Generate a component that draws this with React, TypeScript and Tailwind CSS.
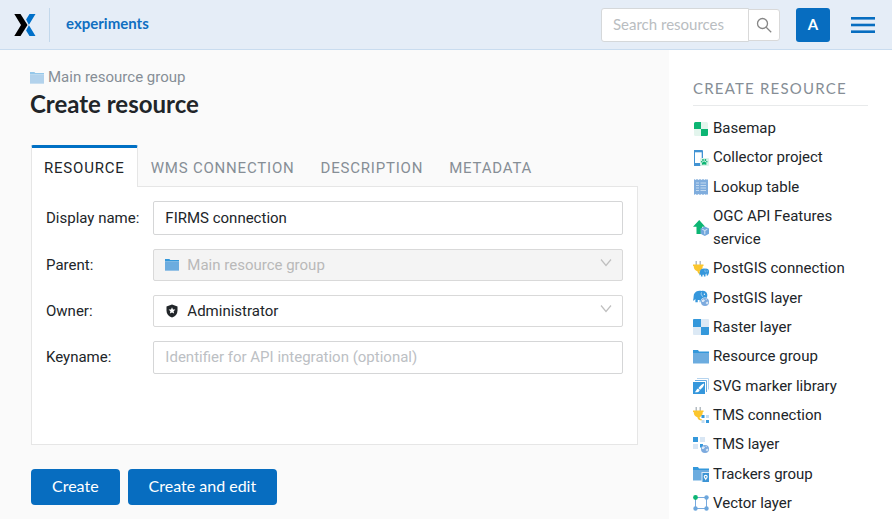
import type { ReactNode } from "react";

const tabs = ["Resource", "WMS connection", "Description", "Metadata"];

function Icon({ children, className = "" }: { children: ReactNode; className?: string }) {
  return (
    <svg viewBox="0 0 16 16" className={`size-4 shrink-0 ${className}`} aria-hidden="true">
      {children}
    </svg>
  );
}

function Folder({ className = "" }: { className?: string }) {
  return (
    <Icon className={className}>
      <path d="M0 1h5l1 1.400H16V4H0z" fill="#3498db" />
      <path d="M0 4h16v10.500H0z" fill="#6cacdf" />
    </Icon>
  );
}

const cube = (
  <g>
    <path d="M11.800 6.500l4.200 2v5.300L11.800 16l-4.300-2.200V8.500z" fill="#72a7dc" />
    <path d="M9.300 9.300l2.500 1.200 2.600-1.200M11.800 10.500v3.800" stroke="#dce9f6" strokeWidth="1" fill="none" />
  </g>
);

const plug = (
  <g>
    <path d="M2.500 0h1.500v4H2.500zM6.500 0H8v4H6.500z" fill="#b4bcc2" />
    <path d="M0 3.500h10.500v1.600H9.800c0 3-1.500 4.600-3.200 5.200.2 1.500 1 1.900 2.200 1.900v1.400c-2.500 0-4-.9-4.400-3.300C2.200 9.700.7 8 .7 5.100H0z" fill="#fbc62d" />
  </g>
);

const elephant = (
  <g>
    <path d="M1 4.500C2.500 1 6 .3 9 1c3-.5 5.500.8 6 3.700.2 2.300-.5 4.500-1.800 6.500-.6 1-1.500.8-1.900-.2L11 8.500 9.500 10v3H7v-2.500H5V13H2.500V9.500L1 11H0c.8-1.800.4-4.200 1-6.500z" fill="#3597dc" />
    <path d="M9 2.500c-1 2 0 3.500 1.500 4.500" stroke="#d5e8f7" strokeWidth=".7" fill="none" />
    <circle cx="12" cy="4.500" r=".7" fill="#fff" />
  </g>
);

const globe = (
  <g>
    <circle cx="12" cy="12" r="4" fill="#7caade" />
    <path d="M9 10l2-.8 1 1.200-1.500 1.700L9 12zM12.500 13l1.800-1.500 1 1-1 2zM12.300 8.800l1.700.7-.8.8z" fill="#dce9f6" />
  </g>
);

const resources: { name: string; icon: ReactNode }[] = [
  {
    name: "Basemap",
    icon: (
      <Icon>
        <rect x="1" y="1" width="14" height="14" rx="1.500" fill="#e3f5ed" />
        <path d="M2.500 1H8v7H1V2.500A1.500 1.500 0 0 1 2.500 1zM8 8h7v5.500a1.500 1.500 0 0 1-1.500 1.500H8z" fill="#0cb573" />
      </Icon>
    ),
  },
  {
    name: "Collector project",
    icon: (
      <Icon>
        <path d="M1 0h8a1 1 0 0 1 1 1v14a1 1 0 0 1-1 1H1z" fill="#4293d3" />
        <path d="M2 2.300h6.700V13H2z" fill="#fff" />
        <rect x="7" y="8" width="9" height="8" rx="1" fill="#d9f2e8" />
        <path d="M11.200 11.500c1.300 0 2.600 1.800 2.300 2.800-.4.900-1.500.3-2.300.3s-1.900.6-2.300-.3c-.3-1 1-2.800 2.300-2.800z" fill="#0cb573" />
        <g fill="#0cb573">
          <circle cx="10" cy="10" r=".9" />
          <circle cx="12.400" cy="10" r=".9" />
          <circle cx="8.700" cy="11.800" r=".8" />
          <circle cx="13.800" cy="11.800" r=".8" />
        </g>
      </Icon>
    ),
  },
  {
    name: "Lookup table",
    icon: (
      <Icon>
        <path d="M1 0l1.500 1L4 0l1.500 1L7 0l1.500 1L10 0l1.500 1L13 0l1 1 1-1v16l-1-1-1 1-1.500-1-1.500 1-1.500-1L7 16l-1.500-1L4 16l-1.500-1L1 16z" fill="#80addd" />
        <path d="M3 4h3m1.500 0H13M3 6.500h3m1.500 0H13M3 9h3m1.500 0H13M3 11.500h3m1.500 0H13" stroke="#c3daf0" strokeWidth="1" />
      </Icon>
    ),
  },
  {
    name: "OGC API Features service",
    icon: (
      <Icon>
        <path d="M6.200 0l6 6.700H9V14H3.500V6.700H0z" fill="#0cb573" />
        {cube}
      </Icon>
    ),
  },
  {
    name: "PostGIS connection",
    icon: (
      <Icon>
        {plug}
        <g transform="translate(6.300 7) scale(.65)">{elephant}</g>
      </Icon>
    ),
  },
  {
    name: "PostGIS layer",
    icon: (
      <Icon>
        <g transform="scale(.95)">{elephant}</g>
        <circle cx="12" cy="12" r="4.600" fill="#fff" />
        {globe}
      </Icon>
    ),
  },
  {
    name: "Raster layer",
    icon: (
      <Icon>
        <rect width="16" height="16" rx="1" fill="#dce9f5" />
        <path d="M1 0h7v8H0V1a1 1 0 0 1 1-1zM8 8h8v7a1 1 0 0 1-1 1H8z" fill="#3498db" />
      </Icon>
    ),
  },
  { name: "Resource group", icon: <Folder /> },
  {
    name: "SVG marker library",
    icon: (
      <Icon>
        <path d="M4 .5h11.500v11" stroke="#b5d3ee" strokeWidth="1" fill="none" />
        <path d="M2 2.500h11.500v11.500" stroke="#6cacdf" strokeWidth="1" fill="none" />
        <rect y="4" width="12" height="12" fill="#3597dc" />
        <path d="M11 5.500c.5 2-2 5-4 6.200L5.500 10C7 8 9.500 5.500 11 5.500zM5 10.500l1.700 1.700c-.5 1.800-2.700 2.300-4.900 2.100 1.600-1 1.400-3.300 3.200-3.800z" fill="#fff" />
      </Icon>
    ),
  },
  {
    name: "TMS connection",
    icon: (
      <Icon>
        {plug}
        <path d="M8.500 8h3v3h-3zM13 13h3v3h-3z" fill="#3498db" />
        <path d="M13 8h3v3h-3zM8.500 13h3v3h-3z" fill="#c5ddf2" />
      </Icon>
    ),
  },
  {
    name: "TMS layer",
    icon: (
      <Icon>
        <path d="M0 0h5v5H0zM7 7h3v3.500H7z" fill="#3498db" />
        <path d="M7 0h5v5H7zM0 7h5v5H0z" fill="#d8e6f4" />
        {globe}
      </Icon>
    ),
  },
  {
    name: "Trackers group",
    icon: (
      <Icon>
        <path d="M0 1h5l1 1.400H16V4H0z" fill="#3498db" />
        <path d="M0 4h16v10.500H0z" fill="#6cacdf" />
        <path d="M8.500 6H16v10H8.500z" fill="#dce9f6" />
        <path d="M9.500 7H16v9H9.500z" fill="#3b94d5" />
        <circle cx="12.700" cy="10.800" r="2" fill="#fff" />
        <circle cx="12.700" cy="10.800" r=".9" fill="#3b94d5" />
        <path d="M11.500 12l1.200 2.500 1.200-2.500z" fill="#fff" />
      </Icon>
    ),
  },
  {
    name: "Vector layer",
    icon: (
      <Icon>
        <path d="M2.500 2.500h11v11h-11z" stroke="#78aade" strokeWidth="1" fill="none" />
        <circle cx="2.500" cy="2.500" r="2.400" fill="#0cb573" />
        <g fill="#6ca6dc">
          <circle cx="13.500" cy="2.500" r="2.200" />
          <circle cx="2.500" cy="13.500" r="2.200" />
          <circle cx="13.500" cy="13.500" r="2.200" />
        </g>
      </Icon>
    ),
  },
];

function Chevron() {
  return (
    <svg viewBox="0 0 12 12" className="pointer-events-none absolute top-[9px] right-[11px] size-3" fill="none" stroke="#bfbfbf" aria-hidden="true">
      <path d="M1 1.500l5 6 5-6" strokeWidth="1.200" />
    </svg>
  );
}

function Shield() {
  return (
    <svg viewBox="0 0 14 14" className="size-[14px]" aria-hidden="true">
      <path d="M7 .5l5.500 2v4.300c0 3.200-2.200 5.600-5.500 6.700-3.300-1.100-5.500-3.500-5.500-6.700V2.500z" fill="#212529" />
      <path d="M7 3.200l1 2.200 2.400.2-1.800 1.600.5 2.400L7 8.400 4.900 9.600l.5-2.400-1.800-1.600 2.400-.2z" fill="#fff" />
    </svg>
  );
}

export default function App() {
  return (
    <div className="flex min-h-screen flex-col bg-[#fafafa] font-[Roboto,sans-serif] text-[15px] leading-[23px] text-[#212529]">
      <header className="flex h-[50px] items-center border-b border-[#c9dcef] bg-[#e5edf7] pr-[17px] pl-[13px] font-[Lato,sans-serif]">
        <a href="#home" aria-label="Home" className="border-r border-[#c3d8eb] py-[5px] pr-3">
          <svg viewBox="0 0 24 24" className="size-6" aria-hidden="true">
            <path d="M1.300 1H7.500l7 11-7 11H1.300l6.700-11z" fill="#000" />
            <path d="M16.500 1h6L15.800 12l6.700 11h-6l-3.400-5.600L16 12l-2.900-5.400z" fill="#0070c9" />
          </svg>
        </a>
        <a href="#experiments" className="ml-4 pb-[2px] font-bold text-[#106fc1]">
          experiments
        </a>
        <form className="ml-auto flex items-center" role="search">
          <input
            type="text"
            aria-label="Search resources"
            placeholder="Search resources"
            className="h-[34px] w-[148px] rounded-l-[3px] border border-[#d5d8da] bg-white px-[11px] pb-[2px] outline-none placeholder:text-[#b9bdc1]"
          />
          <button type="button" aria-label="Search" className="-ml-px flex h-8 w-8 items-center justify-center rounded-r-[3px] border border-[#d9d9d9] bg-white">
            <svg viewBox="0 0 16 16" className="size-4" fill="none" stroke="#868686" strokeWidth="1.300" aria-hidden="true">
              <circle cx="6.500" cy="6.500" r="5" />
              <path d="M10.200 10.200l5 5" />
            </svg>
          </button>
        </form>
        <button type="button" className="ml-4 size-[34px] rounded-[3px] bg-[#076dc0] font-bold text-white">
          A
        </button>
        <button type="button" aria-label="Menu" className="ml-[21px]">
          <svg viewBox="0 0 24 16" className="h-4 w-6" fill="#076dc0" aria-hidden="true">
            <rect width="24" height="2.600" />
            <rect y="6.700" width="24" height="2.600" />
            <rect y="13.400" width="24" height="2.600" />
          </svg>
        </button>
      </header>

      <div className="flex flex-1">
        <main className="min-w-0 flex-1 px-[31px] pt-4 pb-[14px]">
          <nav aria-label="Breadcrumb" className="-ml-px">
            <a href="#main" className="flex items-center gap-1 text-[#868e96]">
              <Folder className="size-[14px] opacity-50" />
              Main resource group
            </a>
          </nav>
          <h1 className="-ml-px font-[Lato,sans-serif] text-[24px] leading-[30px] font-bold">Create resource</h1>

          <div role="tablist" className="mt-[26px] flex">
            {tabs.map((tab, i) => (
              <button
                key={tab}
                type="button"
                role="tab"
                aria-selected={i === 0}
                className={
                  i === 0
                    ? "relative -mb-px h-[42px] rounded-t-[2px] border-x border-t-3 border-x-[#e6e6e6] border-t-[#0070c4] bg-white px-3 pt-px tracking-[0.8px] uppercase"
                    : "h-[41px] border-x border-t-3 border-transparent px-3 pt-[2px] tracking-[0.8px] text-[#868e96] uppercase"
                }
              >
                {tab}
              </button>
            ))}
          </div>

          <form id="resource" className="grid min-h-[259px] grid-cols-[auto_1fr] content-start items-center gap-y-[14px] border border-[#e6e6e6] bg-white p-[14px]">
            <label htmlFor="name" className="pr-[14px]">Display name:</label>
            <input id="name" defaultValue="FIRMS connection" className="h-[34px] w-full rounded-[2px] border border-[#d5d6d7] px-[11px] outline-none" />

            <label htmlFor="parent">Parent:</label>
            <div className="relative">
              <select id="parent" disabled className="h-8 w-full appearance-none rounded-[2px] border border-[#d9d9d9] bg-[#f4f4f4] pr-8 pl-[33px] text-[#b9b9b9] opacity-100">
                <option>Main resource group</option>
              </select>
              <span className="pointer-events-none absolute inset-y-0 left-3 flex items-center">
                <Folder className="size-[14px]" />
              </span>
              <Chevron />
            </div>

            <label htmlFor="owner">Owner:</label>
            <div className="relative">
              <select id="owner" className="h-8 w-full appearance-none rounded-[2px] border border-[#d9d9d9] bg-white pr-8 pl-[33px]">
                <option>Administrator</option>
              </select>
              <span className="pointer-events-none absolute inset-y-0 left-3 flex items-center">
                <Shield />
              </span>
              <Chevron />
            </div>

            <label htmlFor="keyname">Keyname:</label>
            <input
              id="keyname"
              placeholder="Identifier for API integration (optional)"
              className="h-[33px] w-full rounded-[2px] border border-[#d5d6d7] px-[11px] pb-px outline-none placeholder:text-[#bcc0c4]"
            />
          </form>

          <div className="mt-6 flex gap-2 font-[Lato,sans-serif] text-base text-white">
            <button type="submit" form="resource" className="h-9 rounded-[4px] bg-[#076dc0] px-[21px] pb-[2px]">
              Create
            </button>
            <button type="submit" form="resource" className="h-9 rounded-[4px] bg-[#076dc0] px-[21px] pb-[2px]">
              Create and edit
            </button>
          </div>
        </main>

        <aside className="flex w-[223px] flex-col bg-white px-6 pt-[27px] pb-px">
          <h2 className="border-b border-[#e8eaeb] pb-[5px] font-[Lato,sans-serif] tracking-[1.2px] text-[#868e96] uppercase">
            Create resource
          </h2>
          <ul className="mt-2 flex flex-1 flex-col justify-between">
            {resources.map(({ name, icon }) => (
              <li key={name}>
                <a href="#create" className="flex items-center gap-1 py-[3px]">
                  {icon}
                  <span>{name}</span>
                </a>
              </li>
            ))}
          </ul>
        </aside>
      </div>
    </div>
  );
}
